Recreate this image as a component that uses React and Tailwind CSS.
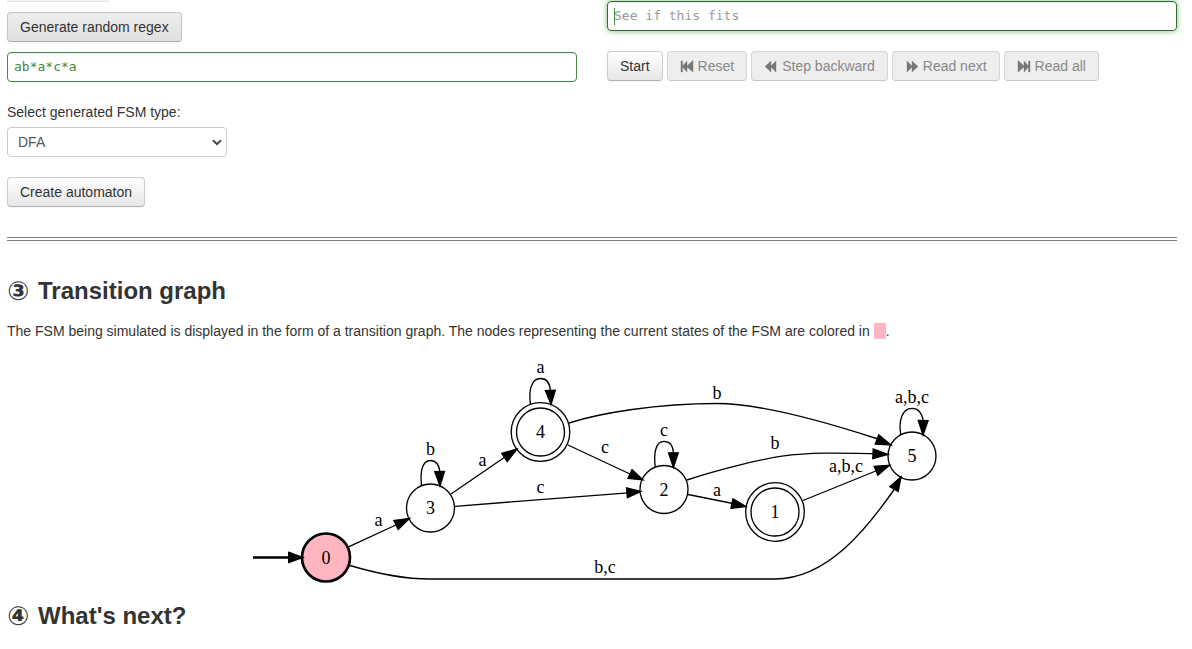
import React from "react";

const states = [
  { id: "0", x: 326, y: 557.5, current: true },
  { id: "3", x: 430.5, y: 508 },
  { id: "4", x: 540.5, y: 432, accepting: true },
  { id: "2", x: 664, y: 489.5 },
  { id: "1", x: 775, y: 512, accepting: true },
  { id: "5", x: 912, y: 456 },
];

// Each edge: curve, arrow head from base centre to tip, label and its baseline.
const edges = [
  { d: "M349 546.7L397 524.5", head: [396, 525, 409.5, 518.5], label: "a", x: 378.5, y: 526 },
  { d: "M451 494L505 457", head: [504.5, 457.5, 517, 449], label: "a", x: 482.5, y: 466 },
  { d: "M455 506.3L628 492.8", head: [627, 492.8, 641, 491.5], label: "c", x: 540.5, y: 493 },
  { d: "M568 445L631 474.5", head: [630, 474, 643, 480], label: "c", x: 605, y: 453 },
  { d: "M569 423C600 413 657 403.5 717 403.5C765 403.5 835 425 878 439", head: [877, 439.5, 891, 445], label: "b", x: 717, y: 399 },
  { d: "M687 480C712 471.5 756 460 782 456.2C812 452 842 453 874 453.7", head: [873, 453.8, 888, 454.5], label: "b", x: 775, y: 449 },
  { d: "M688 494.5L733 503.5", head: [732, 503.5, 746, 506.5], label: "a", x: 717, y: 496 },
  { d: "M803 500.5L877 470.5", head: [876, 470.8, 889.5, 465.3], label: "a,b,c", x: 846, y: 472 },
  { d: "M350 565.5C375 573 405 579 430 579L775 579C828 579 868 527 894.500 489", head: [894, 489, 901, 477], label: "b,c", x: 605, y: 573 },
  { d: "M421.500 485C420 472 422 460.500 430.500 460.500C436 460.500 439 465 440 472", head: [439.6, 471.5, 440, 486], label: "b", x: 430.5, y: 455 },
  { d: "M530.500 404C528.500 391 531 378.500 540.500 378.500C547 378.500 550 384 550.500 391", head: [550.4, 390.5, 551, 404.5], label: "a", x: 540.5, y: 373 },
  { d: "M655.300 467C653.500 454 655.500 441.300 664 441.300C670 441.300 673 446 673.500 453", head: [673.4, 452.8, 673.4, 467.4], label: "c", x: 664, y: 436 },
  { d: "M900.700 434.500C898.500 421 902 408.300 912 408.300C918 408.300 922 413 923.300 421", head: [923.2, 420.5, 923, 435], label: "a,b,c", x: 912, y: 403 },
];

function headPoints([bx, by, tx, ty]) {
  const len = Math.hypot(tx - bx, ty - by);
  const nx = (-(ty - by) / len) * 4.9;
  const ny = ((tx - bx) / len) * 4.9;
  return `${bx + nx},${by + ny} ${tx},${ty} ${bx - nx},${by - ny}`;
}

function TransitionGraph() {
  return (
    <svg
      viewBox="247 357 690 227"
      width="690"
      height="227"
      role="img"
      aria-label="Transition graph"
      className="mx-auto block max-w-full font-['Liberation_Serif',serif] text-[18px]"
    >
      <g fill="none" stroke="#000" strokeWidth="1.33">
        {edges.map((e) => (
          <g key={e.d}>
            <path d={e.d} />
            <polygon points={headPoints(e.head)} fill="#000" />
          </g>
        ))}
        <path d="M253 557.500H289" strokeWidth="2.7" />
        {states.map((s) => (
          <g key={s.id}>
            <circle
              cx={s.x}
              cy={s.y}
              r="24"
              fill={s.current ? "#ffb6c1" : "none"}
              strokeWidth={s.current ? 2.67 : 1.33}
            />
            {s.accepting && <circle cx={s.x} cy={s.y} r="29.3" />}
          </g>
        ))}
        <polygon points="289,552.800 302,557.500 289,562.200" fill="#000" strokeWidth="2" />
      </g>
      <g textAnchor="middle" fill="#000">
        {states.map((s) => (
          <text key={s.id} x={s.x} y={s.y + 6}>{s.id}</text>
        ))}
        {edges.map((e) => (
          <text key={e.d} x={e.x} y={e.y}>{e.label}</text>
        ))}
      </g>
    </svg>
  );
}

const icons = {
  reset: "M1 2H2.500V7L7 2V7L13 1.500V13L7 8V13L2.500 8V13H1Z",
  back: "M1 7.500L7 2V7L12 2V13L7 8V13Z",
  next: "M13 7.500L7 2V7L2 2V13L7 8V13Z",
  all: "M13 2H11.500V7L7 2V7L1 1.500V13L7 8V13L11.500 8V13H13Z",
};

function Button({ children, icon, disabled, hovered }) {
  const look = disabled
    ? "border-[#d6d6d6] border-b-[#c8c8c8] bg-[#eeeeee] text-[#888888]"
    : hovered
      ? "border-[#c5c5c5] border-b-[#adadad] bg-linear-to-b from-[#eeeeee] to-[#e0e0e0] text-[#333333] shadow-[0_1px_2px_rgba(0,0,0,0.05)]"
      : "border-[#cccccc] border-b-[#b3b3b3] bg-linear-to-b from-white to-[#e6e6e6] text-[#333333] shadow-[0_1px_2px_rgba(0,0,0,0.05)]";
  return (
    <button
      type="button"
      disabled={disabled}
      className={`inline-flex h-[30px] items-center gap-1 rounded border px-3 whitespace-nowrap ${look}`}
    >
      {icon && (
        <svg width="14" height="14" viewBox="0 0 14 14" fill="#777777" stroke="#777777" strokeWidth="0.4" aria-hidden="true">
          <path d={icons[icon]} />
        </svg>
      )}
      {children}
    </button>
  );
}

function Heading({ mark, children }) {
  return (
    <h3 className="flex h-10 items-center gap-[9px] text-2xl font-bold">
      <span className="font-['DejaVu_Sans',sans-serif] text-[26px]">{mark}</span>
      {children}
    </h3>
  );
}

export default function App() {
  return (
    <main className="bg-white pr-[15px] pl-[7px] font-['Liberation_Sans',Arial,sans-serif] text-sm leading-5 text-[#333333]">
      <div className="grid grid-cols-2 gap-[30px]">
        <section className="flex flex-col items-start">
          <div className="h-0.5 w-[102px] rounded-b border border-t-0 border-[#e1e1e8] bg-[#f7f7f9]" />
          <div className="mt-2.5">
            <Button hovered>Generate random regex</Button>
          </div>
          <input
            type="text"
            aria-label="Regular expression"
            defaultValue="ab*a*c*a"
            className="mt-2.5 h-[30px] w-full rounded border border-[#468847] px-1.5 pb-0.5 font-['DejaVu_Sans_Mono',monospace] text-[13px] text-[#468847] shadow-[inset_0_1px_1px_rgba(0,0,0,0.075)] outline-none"
          />
          <label htmlFor="fsm-type" className="mt-5">Select generated FSM type:</label>
          <div className="relative mt-[5px]">
            <select
              id="fsm-type"
              defaultValue="DFA"
              className="block h-[30px] w-[220px] appearance-none rounded border border-[#cccccc] bg-white px-2.5 text-[#555555]"
            >
              <option>DFA</option>
              <option>NFA</option>
            </select>
            <svg
              width="10"
              height="7"
              viewBox="0 0 10 7"
              fill="none"
              stroke="#444444"
              strokeWidth="2"
              aria-hidden="true"
              className="pointer-events-none absolute top-3 right-[5px]"
            >
              <path d="M1 1.200L5 5.200L9 1.200" />
            </svg>
          </div>
          <div className="mt-5">
            <Button>Create automaton</Button>
          </div>
        </section>
        <section className="pt-px">
          <div className="relative">
            <input
              type="text"
              aria-label="Input word"
              placeholder="See if this fits"
              className="block h-[30px] w-full rounded border border-[#356635] px-1.5 pb-0.5 font-['DejaVu_Sans_Mono',monospace] text-[13px] text-[#468847] shadow-[inset_0_1px_1px_rgba(0,0,0,0.075),0_0_6px_#7aba7b] outline-none placeholder:text-[#999999]"
            />
            <span className="absolute top-[7px] left-[7px] h-[17px] w-px bg-[#468847]" />
          </div>
          <div className="mt-5 flex flex-wrap gap-1">
            <Button>Start</Button>
            <Button icon="reset" disabled>Reset</Button>
            <Button icon="back" disabled>Step backward</Button>
            <Button icon="next" disabled>Read next</Button>
            <Button icon="all" disabled>Read all</Button>
          </div>
        </section>
      </div>
      <hr className="mt-[30px] mb-[30px] border-t-4 border-double border-[#808080]" />
      <Heading mark="③">Transition graph</Heading>
      <p className="mt-2.5 mb-4">
        The FSM being simulated is displayed in the form of a transition graph. The nodes representing the current
        states of the FSM are colored in <span className="bg-[#ffb6c1] px-1.5" />.
      </p>
      <TransitionGraph />
      <div className="mt-3">
        <Heading mark="④">What&apos;s next?</Heading>
      </div>
    </main>
  );
}
